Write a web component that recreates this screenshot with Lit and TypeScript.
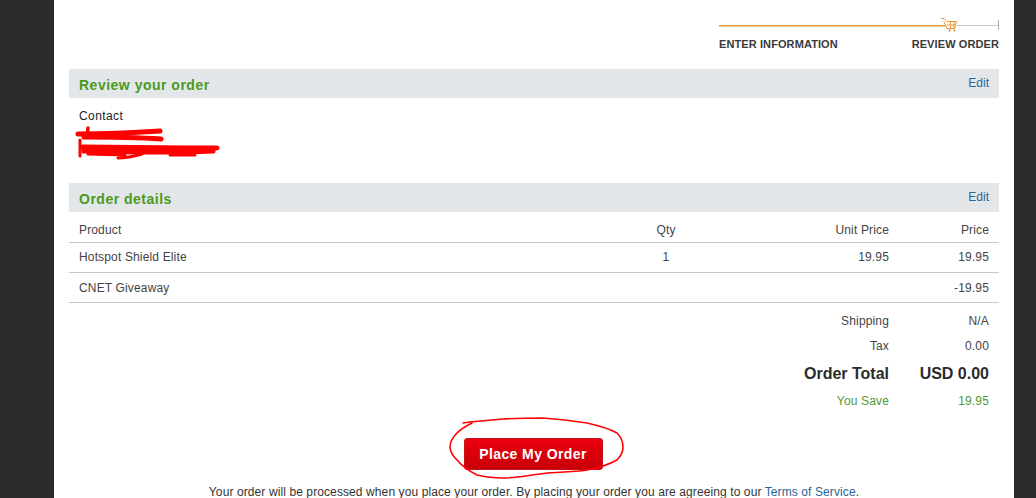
import { LitElement, html, css, svg } from 'lit';
import { customElement } from 'lit/decorators.js';

const items = [
  { name: 'Hotspot Shield Elite', qty: '1', unit: '19.95', price: '19.95' },
  { name: 'CNET Giveaway', qty: '', unit: '', price: '-19.95' },
];

@customElement('app-root')
export class AppRoot extends LitElement {
  static styles = css`
    :host {
      display: block;
      height: 498px;
      overflow: hidden;
      background: #2b2b2b;
      font-family: 'Liberation Sans', Arial, sans-serif;
      font-size: 12px;
      color: #333;
    }

    .page {
      position: relative;
      box-sizing: border-box;
      width: 960px;
      height: 498px;
      margin-left: 54px;
      padding: 0 15px;
      background: #fff;
      overflow: hidden;
    }

    .steps {
      display: flex;
      flex-direction: column;
      width: 280px;
      margin-left: 650px;
      padding-top: 16px;
      height: 69px;
      box-sizing: border-box;
    }

    .track {
      display: flex;
      align-items: center;
      height: 18px;
    }

    .track .done {
      width: 226px;
      height: 1px;
      background: #e39a35;
      box-shadow: 0 1px 0 #f2d2a4;
    }

    .track .todo {
      flex: 1;
      height: 1px;
      background: #c9c9c9;
    }

    .track .end {
      width: 1px;
      height: 10px;
      background: #aaa;
    }

    .track .cart {
      margin-left: -4px;
    }

    .track svg {
      display: block;
    }

    .step-labels {
      display: flex;
      justify-content: space-between;
      margin-top: 3px;
      font-size: 11px;
      font-weight: bold;
      letter-spacing: 0.1px;
      line-height: 14px;
      color: #3a3a3a;
    }

    .bar {
      display: flex;
      justify-content: space-between;
      height: 29px;
      padding: 0 10px;
      background: #e3e7ea;
    }

    .bar h2 {
      margin: 0;
      font-size: 14px;
      line-height: 32px;
      color: #4b9a1f;
      letter-spacing: 0.5px;
    }

    .bar a,
    .note a {
      color: #2a6496;
      text-decoration: none;
    }

    .bar a {
      line-height: 29px;
    }

    .contact {
      height: 85px;
      box-sizing: border-box;
      padding: 11px 10px 0;
      line-height: 14px;
      letter-spacing: 0.4px;
      color: #222;
    }

    .row {
      display: grid;
      grid-template-columns: 567px 40px 203px 100px;
      padding: 0 10px;
      border-bottom: 1px solid #c8c8c8;
      letter-spacing: 0.15px;
      color: #444;
    }

    .row > :nth-child(2) {
      text-align: center;
    }

    .row > :nth-child(3),
    .row > :nth-child(4) {
      text-align: right;
    }

    .row.head {
      height: 30px;
      line-height: 37px;
    }

    .row.item {
      height: 29px;
      line-height: 29px;
    }

    .row.item + .row.item {
      line-height: 31px;
    }

    .summary {
      padding: 6px 10px 0;
    }

    .sum {
      display: grid;
      grid-template-columns: 810px 100px;
      height: 25px;
      line-height: 25px;
      text-align: right;
      letter-spacing: 0.15px;
      color: #444;
    }

    .sum.total {
      height: 29px;
      line-height: 29px;
      font-size: 16px;
      font-weight: bold;
      letter-spacing: 0;
      color: #2b2b2b;
    }

    .sum.save {
      height: 27px;
      line-height: 27px;
      color: #4f9a33;
    }

    .actions {
      display: flex;
      justify-content: center;
      margin-top: 23px;
      padding-right: 2px;
    }

    .place {
      width: 139px;
      height: 32px;
      padding: 0;
      border: 1px solid #c4121a;
      border-radius: 3px;
      background: linear-gradient(#ec0010, #c80008);
      color: #fff;
      font-family: inherit;
      font-size: 14px;
      font-weight: bold;
      letter-spacing: 0.4px;
    }

    .note {
      margin-top: 15px;
      text-align: center;
      line-height: 14px;
      letter-spacing: 0.1px;
      color: #333;
    }

    .ink {
      position: absolute;
      left: 0;
      top: 0;
      pointer-events: none;
    }
  `;

  private cart() {
    return svg`
      <svg width="16" height="16" viewBox="0 0 16 16" fill="none" stroke="#e8973c" stroke-width="1">
        <path d="M0 1.500h3l3 3h9.500l-2 7h-7.500l-3-7" />
        <path d="M6 8h9M9.500 4.500v7M13 4.500v7" />
        <circle cx="8.500" cy="13.500" r="0.700" fill="#e8973c" />
        <circle cx="13.500" cy="13.500" r="0.700" fill="#e8973c" />
      </svg>`;
  }

  render() {
    return html`
      <div class="page">
        <div class="steps">
          <div class="track">
            <span class="done"></span>
            <span class="cart">${this.cart()}</span>
            <span class="todo"></span>
            <span class="end"></span>
          </div>
          <div class="step-labels"><span>ENTER INFORMATION</span><span>REVIEW ORDER</span></div>
        </div>

        <div class="bar"><h2>Review your order</h2><a href="#">Edit</a></div>
        <div class="contact">Contact</div>

        <div class="bar"><h2>Order details</h2><a href="#">Edit</a></div>
        <div class="row head"><span>Product</span><span>Qty</span><span>Unit Price</span><span>Price</span></div>
        ${items.map(
          (i) => html`<div class="row item"><span>${i.name}</span><span>${i.qty}</span><span>${i.unit}</span><span>${i.price}</span></div>`
        )}

        <div class="summary">
          <div class="sum"><span>Shipping</span><span>N/A</span></div>
          <div class="sum"><span>Tax</span><span>0.00</span></div>
          <div class="sum total"><span>Order Total</span><span>USD 0.00</span></div>
          <div class="sum save"><span>You Save</span><span>19.95</span></div>
        </div>

        <div class="actions"><button class="place">Place My Order</button></div>
        <div class="note">
          Your order will be processed when you place your order. By placing your order you are agreeing to our
          <a href="#">Terms of Service</a>.
        </div>

        <svg class="ink" width="960" height="498" viewBox="54 0 960 498" fill="none" stroke="#ff0000" stroke-linecap="round" stroke-linejoin="round">
          <path stroke-width="1.600" d="M463 423C476 421 490 420 503 419C520 418 530 418 543 418C560 419 575 421 587 423C600 426 610 429 617 433C621 437 623 442 623 447C623 452 621 456 617 460C608 465 598 468 587 470C573 472 560 472 547 473C530 475 516 478 503 478C494 478 485 477 477 475C469 471 462 466 457 460C453 456 450 452 450 447C450 442 453 437 457 433C461 429 466 426 472 423" />
          <path stroke-width="5" d="M78 134C100 134 130 133 160 131M84 137C105 137 130 137 161 139" />
          <path stroke-width="3.500" d="M88 128L87 136" />
          <path stroke-width="5" d="M82 147C120 147 170 148 217 148M84 151C120 152 170 153 213 151" />
          <path stroke-width="3" d="M80 140L80 156M88 154L125 155M118 158C125 158 135 156 142 154M170 155L195 155" />
        </svg>
      </div>
    `;
  }
}
